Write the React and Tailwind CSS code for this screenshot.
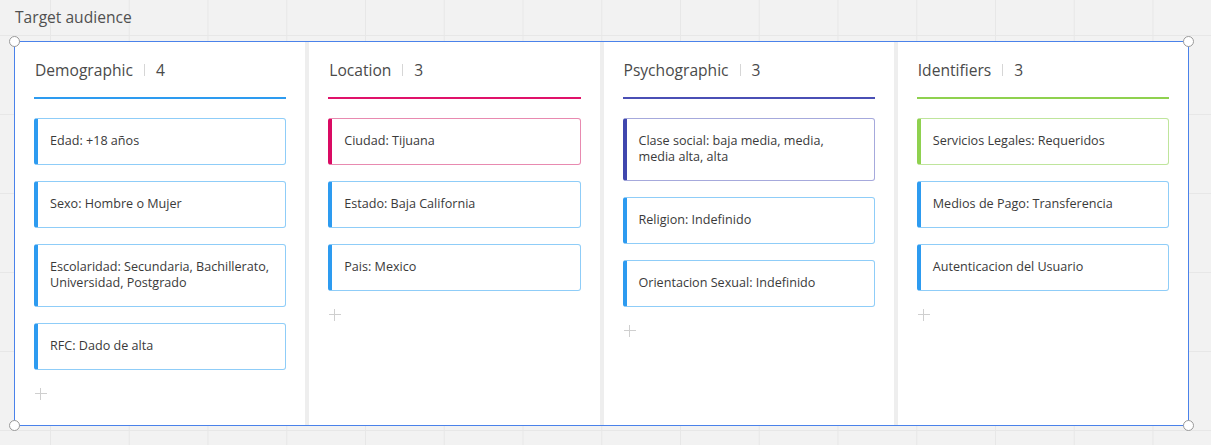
import React from "react";

const columns = [
  {
    title: "Demographic",
    count: 4,
    line: "bg-[#2d9bf0]",
    cards: [
      { text: "Edad: +18 años", c: "blue" },
      { text: "Sexo: Hombre o Mujer", c: "blue" },
      { text: "Escolaridad: Secundaria, Bachillerato, Universidad, Postgrado", c: "blue" },
      { text: "RFC: Dado de alta", c: "blue" },
    ],
  },
  {
    title: "Location",
    count: 3,
    line: "bg-[#e0126a]",
    cards: [
      { text: "Ciudad: Tijuana", c: "pink" },
      { text: "Estado: Baja California", c: "blue" },
      { text: "Pais: Mexico", c: "blue" },
    ],
  },
  {
    title: "Psychographic",
    count: 3,
    line: "bg-[#4a4fb5]",
    cards: [
      { text: "Clase social: baja media, media, media alta, alta", c: "purple" },
      { text: "Religion: Indefinido", c: "blue" },
      { text: "Orientacion Sexual: Indefinido", c: "blue" },
    ],
  },
  {
    title: "Identifiers",
    count: 3,
    line: "bg-[#8fd14f]",
    cards: [
      { text: "Servicios Legales: Requeridos", c: "green" },
      { text: "Medios de Pago: Transferencia", c: "blue" },
      { text: "Autenticacion del Usuario", c: "blue" },
    ],
  },
];

const cardStyles = {
  blue: "border-[#8fcdf8] border-l-[#2d9bf0]",
  pink: "border-[#e88ab0] border-l-[#da0a63]",
  purple: "border-[#a6a9dc] border-l-[#4047ae]",
  green: "border-[#bfe59c] border-l-[#8fd14f]",
};

function Card({ text, c }) {
  return (
    <div
      className={`border border-l-[4px] rounded-[3px] bg-white pl-[12px] pr-[13px] pt-[14px] pb-[15px] text-[12.6px] leading-[16px] text-[#3a3a3a] ${cardStyles[c]}`}
    >
      {text}
    </div>
  );
}

function Column({ col }) {
  return (
    <div className="flex-1 bg-white flex flex-col px-[19px]">
      <div className="pt-[17px] pl-[1px] flex items-center text-[15.6px] leading-[22px] text-[#4a4a4a]">
        <span>{col.title}</span>
        <span className="w-px h-[12px] bg-[#d6d6d6] mx-[11px]" />
        <span>{col.count}</span>
      </div>
      <div className={`mt-[16px] h-[2px] ${col.line}`} />
      <div className="mt-[19px] flex flex-col gap-[16px]">
        {col.cards.map((card, i) => (
          <Card key={i} {...card} />
        ))}
      </div>
      <div className="mt-[18px] ml-[1px] w-[12px] h-[12px] relative">
        <span className="absolute left-[5px] top-0 w-px h-[12px] bg-[#cfcfcf]" />
        <span className="absolute top-[5px] left-0 h-px w-[12px] bg-[#cfcfcf]" />
      </div>
    </div>
  );
}

function Handle({ pos }) {
  return (
    <span
      className={`absolute w-[11px] h-[11px] rounded-full bg-white border-[1.5px] border-[#9a9a9a] ${pos}`}
    />
  );
}

export default function App() {
  return (
    <div
      className="w-[1211px] h-[445px] overflow-hidden bg-[#f2f2f2] bg-[linear-gradient(to_right,#e7e7e7_1px,transparent_1px),linear-gradient(to_bottom,#e7e7e7_1px,transparent_1px)] bg-[length:78.75px_79px] bg-[position:50px_35px]"
      style={{ fontFamily: '"Open Sans", "Noto Sans", sans-serif' }}
    >
      <div className="pl-[15px] pt-[6px] text-[15.6px] leading-[22px] text-[#505050]">
        Target audience
      </div>
      <div className="relative mt-[13px] ml-[14px] w-[1175px] h-[385px] border border-[#4a82ea] bg-[#eeeeee] flex gap-[4px]">
        {columns.map((col, i) => (
          <Column key={i} col={col} />
        ))}
        <Handle pos="-left-[6px] -top-[6px]" />
        <Handle pos="-right-[6px] -top-[6px]" />
        <Handle pos="-left-[6px] -bottom-[6px]" />
        <Handle pos="-right-[6px] -bottom-[6px]" />
      </div>
    </div>
  );
}
